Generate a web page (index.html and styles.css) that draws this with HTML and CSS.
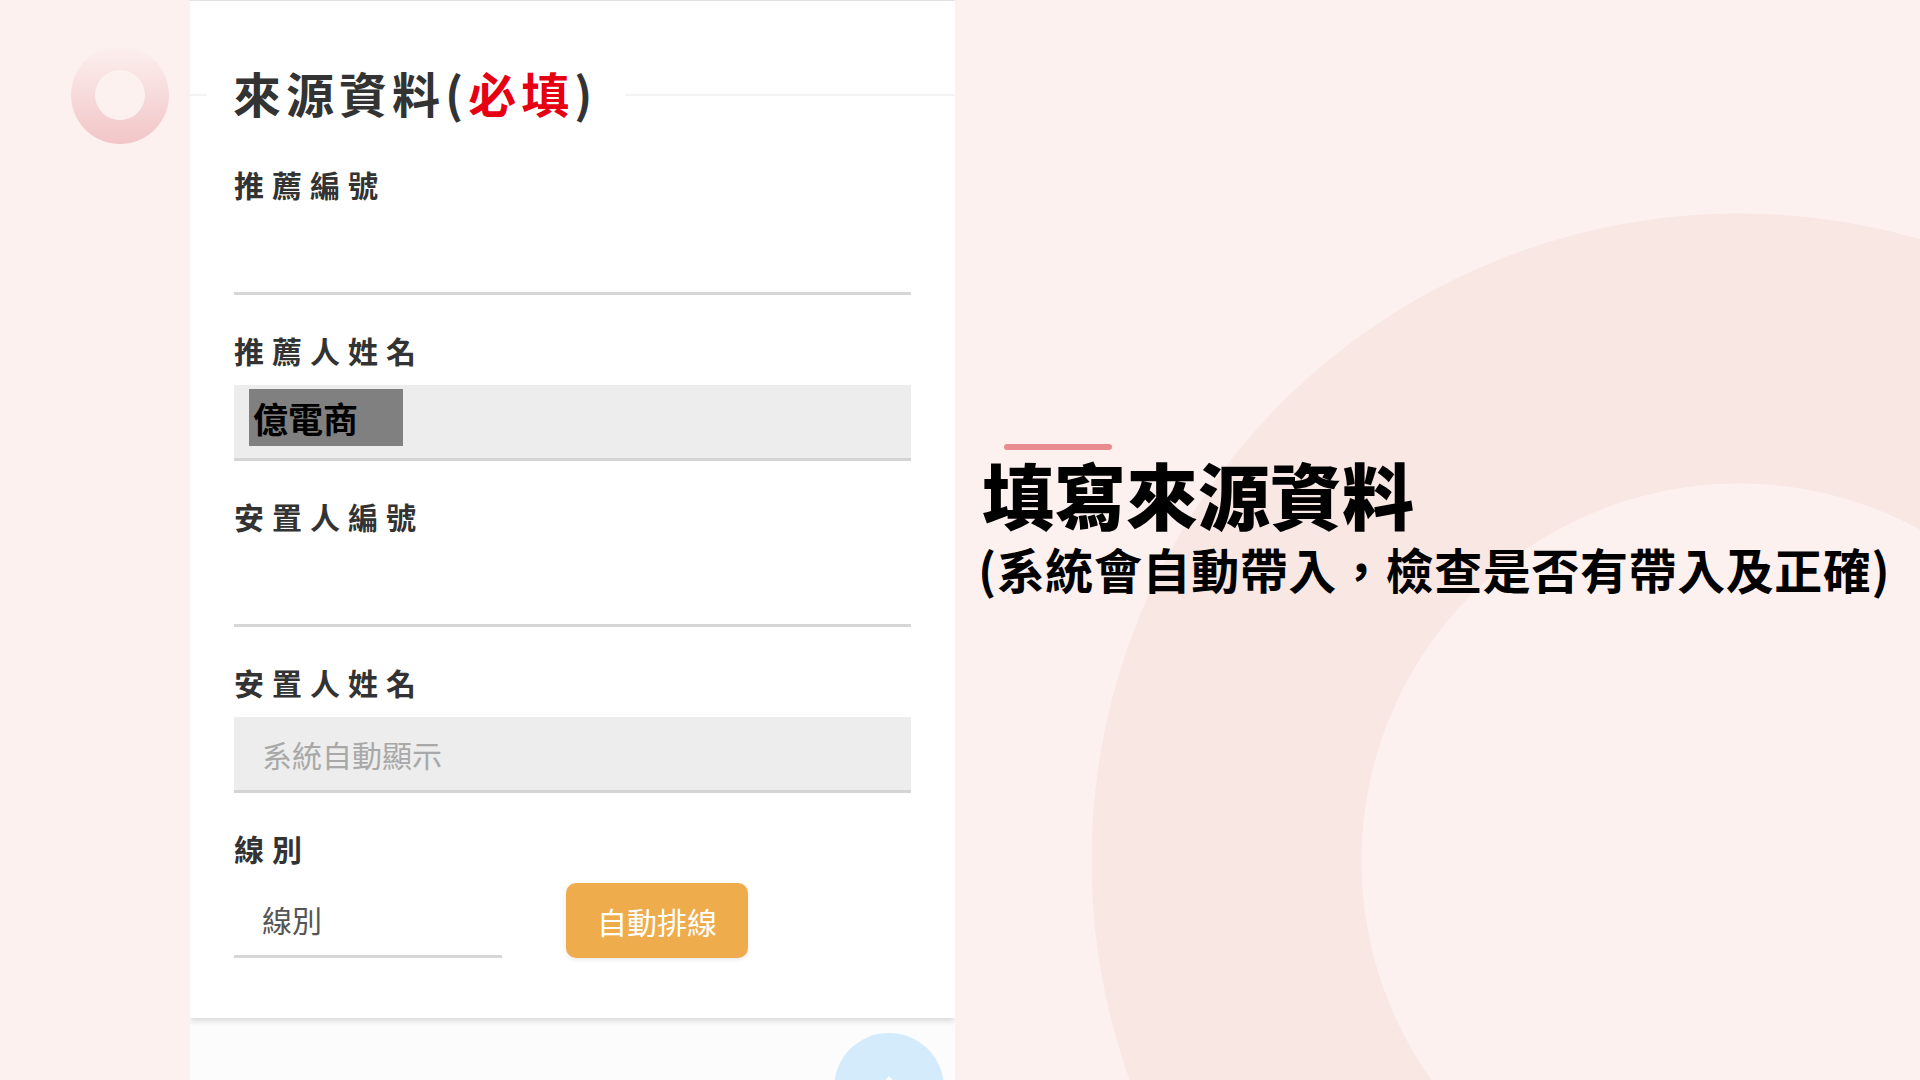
FILE: index.html
```html
<!DOCTYPE html>
<html lang="zh-Hant">
<head>
    <meta charset="UTF-8">
    <meta name="viewport" content="width=device-width, initial-scale=1.0">
    <title>填寫來源資料</title>
    <link rel="stylesheet" href="styles.css">
</head>
<body>
    <div class="page">
        <aside class="gutter">
            <div class="ring"></div>
        </aside>

        <main class="phone">
            <div class="card-edge"></div>

            <section class="card">
                <div class="card-title">
                    <span class="rule short"></span>
                    <h2>來源資料(<em>必填</em>)</h2>
                    <span class="rule"></span>
                </div>

                <div class="field-group">
                    <div class="field-label">推薦編號</div>
                    <div class="field line"></div>
                </div>

                <div class="field-group">
                    <div class="field-label">推薦人姓名</div>
                    <div class="field filled">
                        <span class="selected">億電商</span>
                    </div>
                </div>

                <div class="field-group">
                    <div class="field-label">安置人編號</div>
                    <div class="field line"></div>
                </div>

                <div class="field-group">
                    <div class="field-label">安置人姓名</div>
                    <div class="field filled">
                        <span class="placeholder">系統自動顯示</span>
                    </div>
                </div>

                <div class="field-group last">
                    <div class="field-label">線別</div>
                    <div class="field-row">
                        <div class="field line short-field">
                            <span class="value">線別</span>
                        </div>
                        <button class="auto-btn">自動排線</button>
                    </div>
                </div>
            </section>

            <div class="below">
                <div class="fab">
                    <svg width="40" height="40" viewBox="0 0 40 40">
                        <path d="M20 10 L30 22 L10 22 Z" fill="#ffffff"/>
                    </svg>
                </div>
            </div>
        </main>

        <div class="caption">
            <div class="accent"></div>
            <h1>填寫來源資料</h1>
            <p>(系統會自動帶入，檢查是否有帶入及正確)</p>
        </div>
    </div>
</body>
</html>
```

FILE: styles.css
```css
html, body {
    margin: 0;
    padding: 0;
}
body {
    width: 1920px;
    height: 1080px;
    overflow: hidden;
    font-family: "Noto Sans CJK TC", "Noto Sans", sans-serif;
    background-color: #fcf1ef;
    /* big ring in the background, right half */
    background-image: radial-gradient(circle at 1739px 861px,
        #fcf1ef 0, #fcf1ef 377px,
        #f9e7e4 378px, #f9e7e4 647px,
        transparent 648px);
}
.page {
    display: flex;
    height: 1080px;
}

/* left gutter with the little ring */
.gutter {
    width: 190px;
    flex-shrink: 0;
    padding: 46px 0 0 71px;
    box-sizing: border-box;
}
.ring {
    width: 98px;
    height: 98px;
    border-radius: 50%;
    background: linear-gradient(#fcf0ef, #f2c5c7);
    display: flex;
    align-items: center;
    justify-content: center;
}
.ring::after {
    content: "";
    width: 50px;
    height: 50px;
    border-radius: 50%;
    background: #fcf1ef;
}

/* phone screenshot */
.phone {
    width: 765px;
    flex-shrink: 0;
    height: 1080px;
    overflow: hidden;
    background: #fcfcfc;
    display: flex;
    flex-direction: column;
}
.card-edge {
    height: 5px;
    background: #fff;
    border-bottom: 1px solid #e2e2e2;
    box-shadow: 0 2px 8px rgba(0, 0, 0, 0.12);
    position: relative;
    z-index: 2;
}
.card {
    background: #fff;
    padding: 63px 44px 60px;
    box-shadow: 0 3px 6px rgba(0, 0, 0, 0.14);
    position: relative;
    z-index: 1;
}
.card-title {
    display: flex;
    align-items: center;
    margin: 0 -44px 44px;
}
.card-title h2 {
    margin: 0 28px 0 26px;
    font-size: 48px;
    line-height: 56px;
    letter-spacing: 5px;
    font-weight: 700;
    color: #333;
}
.card-title h2 em {
    font-style: normal;
    color: #e60012;
}
.rule {
    flex: 1;
    height: 2px;
    margin-top: 6px;
    background: #f3f3f3;
}
.rule.short {
    flex: 0 0 17px;
}

.field-group {
    margin-bottom: 35px;
}
.field-group.last {
    margin-bottom: 0;
}
.field-label {
    font-size: 30px;
    line-height: 40px;
    font-weight: 700;
    letter-spacing: 8px;
    color: #333;
    margin-bottom: 15px;
}
.field {
    height: 76px;
    box-sizing: border-box;
    display: flex;
    align-items: center;
    padding-left: 28px;
}
.field.line {
    border-bottom: 3px solid #d6d6d6;
}
.field.filled {
    background: #ededed;
    border-bottom: 3px solid #d4d4d4;
    padding-left: 15px;
}
.field.filled .placeholder {
    padding-left: 13px;
}
.selected {
    width: 154px;
    height: 57px;
    box-sizing: border-box;
    padding-left: 4px;
    background: #808080;
    color: #000;
    font-size: 35px;
    font-weight: 700;
    line-height: 57px;
    margin-top: -8px;
}
.placeholder {
    font-size: 30px;
    color: #a8a8a8;
}
.value {
    font-size: 30px;
    color: #555;
}

.field-row {
    display: flex;
    align-items: flex-start;
    gap: 64px;
}
.short-field {
    width: 268px;
    height: 75px;
}
.auto-btn {
    width: 182px;
    height: 75px;
    border: none;
    border-radius: 10px;
    background: #eeac4c;
    color: #fff;
    font-family: inherit;
    font-size: 30px;
    box-shadow: 0 2px 4px rgba(0, 0, 0, 0.08);
    cursor: pointer;
}

.below {
    display: flex;
    justify-content: flex-end;
    padding: 15px 11px 0 0;
}
.fab {
    width: 110px;
    height: 110px;
    border-radius: 50%;
    background: #d3ebfb;
    display: flex;
    justify-content: center;
    padding-top: 33px;
    box-sizing: border-box;
}

/* right caption */
.caption {
    padding: 444px 0 0 27px;
}
.accent {
    width: 108px;
    height: 6px;
    border-radius: 3px;
    background: #ea8c8f;
    margin-left: 22px;
}
.caption h1 {
    margin: 7px 0 0;
    font-size: 72px;
    line-height: 72px;
    font-weight: 900;
    color: #000;
}
.caption p {
    margin: 11px 0 0 -4px;
    font-size: 48px;
    line-height: 56px;
    letter-spacing: 0.6px;
    font-weight: 700;
    color: #000;
    white-space: nowrap;
}
```
